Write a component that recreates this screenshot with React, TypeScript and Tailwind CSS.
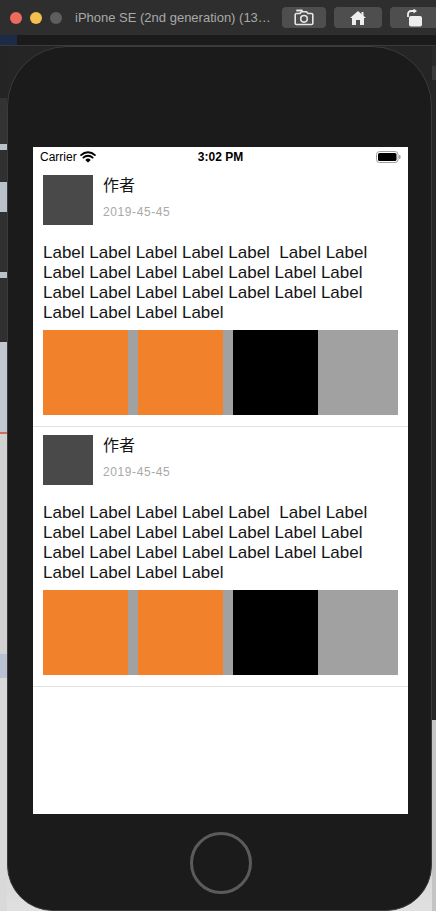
import React from "react";

const LABEL_TEXT =
  "Label Label Label Label Label  Label Label Label Label Label Label Label Label Label Label Label Label Label Label Label Label Label Label Label Label";

function Wifi() {
  return (
    <svg width="16" height="12" viewBox="0 0 16 12">
      <path d="M8 11.6 L5.3 8.9 A3.9 3.9 0 0 1 10.7 8.9 Z" fill="#000" />
      <path d="M3.4 6.6 A6.6 6.6 0 0 1 12.6 6.6" stroke="#000" strokeWidth="1.9" fill="none" strokeLinecap="round" />
      <path d="M1.1 4.1 A9.9 9.9 0 0 1 14.9 4.1" stroke="#000" strokeWidth="1.9" fill="none" strokeLinecap="round" />
    </svg>
  );
}

function Battery() {
  return (
    <svg width="25" height="12" viewBox="0 0 25 12">
      <rect x="0.5" y="0.5" width="21.5" height="11" rx="3" fill="none" stroke="#a0a0a0" strokeWidth="1" />
      <rect x="2" y="2" width="18.5" height="8" rx="1.6" fill="#000" />
      <rect x="22.8" y="4" width="1.7" height="4" rx="0.8" fill="#a0a0a0" />
    </svg>
  );
}

function CameraIcon() {
  return (
    <svg width="20" height="17" viewBox="0 0 20 17">
      <path d="M3 1.5 h5" stroke="#e6e6e6" strokeWidth="1.8" strokeLinecap="round" />
      <path
        d="M2.5 4.5 h3.5 l1.5 -1.8 h5 l1.5 1.8 h3.5 a1.3 1.3 0 0 1 1.3 1.3 v8.4 a1.3 1.3 0 0 1 -1.3 1.3 h-15 a1.3 1.3 0 0 1 -1.3 -1.3 v-8.4 a1.3 1.3 0 0 1 1.3 -1.3 z"
        fill="none"
        stroke="#e6e6e6"
        strokeWidth="1.6"
      />
      <circle cx="10" cy="9.8" r="3.3" fill="none" stroke="#e6e6e6" strokeWidth="1.6" />
    </svg>
  );
}

function HomeIcon() {
  return (
    <svg width="18" height="16" viewBox="0 0 18 16">
      <path d="M9 1 L17 8 L15 8 L15 15 L11 15 L11 10 L7 10 L7 15 L3 15 L3 8 L1 8 Z" fill="#eeeeee" />
      <rect x="12.5" y="2" width="2" height="4" fill="#eeeeee" />
    </svg>
  );
}

function RotateIcon() {
  return (
    <svg width="18" height="18" viewBox="0 0 18 18">
      <rect x="4" y="7" width="13" height="10.5" rx="2" fill="#eeeeee" />
      <path d="M3 8 V5 a3 3 0 0 1 3 -3 h3" stroke="#eeeeee" strokeWidth="1.8" fill="none" />
      <path d="M8.5 -0.5 L12 2 L8.5 4.5 Z" fill="#eeeeee" />
    </svg>
  );
}

function Cell() {
  return (
    <div className="px-[10px] pt-[8px] pb-[11px] border-b border-[#e2e2e2] shrink-0">
      <div className="flex gap-[10px]">
        <div className="w-[50px] h-[50px] bg-[#494949] shrink-0" />
        <div className="flex flex-col">
          <div className="text-[16px] leading-[20px] mt-[1px] text-[#151515]">作者</div>
          <div className="mt-[8px] text-[12px] leading-[16px] text-[#a8a8a8] tracking-[0.6px]">2019-45-45</div>
        </div>
      </div>
      <p className="mt-[18px] text-[17px] leading-[20px] text-[#141414] whitespace-pre-wrap">{LABEL_TEXT}</p>
      <div className="mt-[7px] h-[85px] bg-[#a1a1a1] flex gap-[10px]">
        <div className="w-[85px] h-[85px] bg-[#f1812a]" />
        <div className="w-[85px] h-[85px] bg-[#f1812a]" />
        <div className="w-[85px] h-[85px] bg-black" />
      </div>
    </div>
  );
}

export default function App() {
  return (
    <div className="w-[436px] h-[911px] overflow-hidden bg-[#242424] flex flex-col font-['Liberation_Sans','Noto_Sans_CJK_SC',sans-serif]">
      {/* window title bar */}
      <div className="h-[35px] shrink-0 bg-[#2e2e2e] flex items-center pl-[10px]">
        <div className="flex gap-[8px]">
          <div className="w-[12px] h-[12px] rounded-full bg-[#ec6a5e]" />
          <div className="w-[12px] h-[12px] rounded-full bg-[#f4bf4f]" />
          <div className="w-[12px] h-[12px] rounded-full bg-[#5e5e5e]" />
        </div>
        <div className="ml-[13px] text-[13px] text-[#a9a9a9] whitespace-nowrap">iPhone SE (2nd generation) (13…</div>
        <div className="ml-[11px] flex gap-[8px]">
          <div className="w-[44px] h-[21px] rounded-[4px] bg-[#4e4e4e] flex items-center justify-center">
            <CameraIcon />
          </div>
          <div className="w-[48px] h-[21px] rounded-[4px] bg-[#4e4e4e] flex items-center justify-center">
            <HomeIcon />
          </div>
          <div className="w-[48px] h-[21px] rounded-[4px] bg-[#4e4e4e] flex items-center justify-center shrink-0">
            <RotateIcon />
          </div>
        </div>
      </div>
      {/* toolbar strip behind */}
      <div className="h-[11px] shrink-0 bg-[#1b1b1b] border-b border-[#3a3a3a] flex">
        <div className="w-[17px] h-full bg-[#1c2b48]" />
      </div>
      {/* simulator area */}
      <div className="flex-1 flex bg-[linear-gradient(to_bottom,#252525_0px,#252525_600px,#cfcfcf_780px,#e0e0e0_865px)]">
        {/* left sliver of window behind */}
        <div className="w-[7px] shrink-0 flex flex-col">
          <div className="h-[52px] bg-[#242424]" />
          <div className="h-[46px] bg-[#333333]" />
          <div className="h-[6px] bg-[#b9c1cb]" />
          <div className="h-[32px] bg-[#303030] rounded-r-[2px]" />
          <div className="h-[30px] bg-[#b9c1cb]" />
          <div className="h-[60px] bg-[#303030]" />
          <div className="h-[6px] bg-[#b9c1cb]" />
          <div className="h-[64px] bg-[#303030]" />
          <div className="h-[90px] bg-[#c2c8d0]" />
          <div className="h-[2px] bg-[#d46a5a]" />
          <div className="h-[220px] bg-[#d2d2d2]" />
          <div className="h-[24px] bg-[#b8c3d2]" />
          <div className="flex-1 bg-[#d9d9d9]" />
        </div>
        {/* phone body */}
        <div className="w-[425px] h-[865px] shrink-0 rounded-t-[60px] rounded-b-[46px] bg-[#1b1b1b] border border-[#3b3b3b] pl-[25px] pt-[100px] flex flex-col">
          <div className="w-[375px] h-[667px] bg-white flex flex-col overflow-hidden shrink-0">
            {/* status bar */}
            <div className="h-[20px] shrink-0 grid grid-cols-3 items-center px-[7px] text-[12px] text-black">
              <div className="flex items-center gap-[3px]">
                <span>Carrier</span>
                <Wifi />
              </div>
              <div className="text-center font-bold">3:02 PM</div>
              <div className="flex justify-end">
                <Battery />
              </div>
            </div>
            <Cell />
            <Cell />
          </div>
          <div className="w-[375px] flex justify-center mt-[18px]">
            <div className="w-[62px] h-[62px] rounded-full border-[3px] border-[#5b5b5b]" />
          </div>
        </div>
        {/* right sliver */}
        <div className="w-[4px] shrink-0 flex flex-col">
          <div className="h-[20px] bg-[#2a2a2a]" />
          <div className="h-[14px] bg-[#3a3a3a]" />
          <div className="h-[640px] bg-[#262626]" />
          <div className="flex-1 bg-[#c4c4c4]" />
        </div>
      </div>
    </div>
  );
}
